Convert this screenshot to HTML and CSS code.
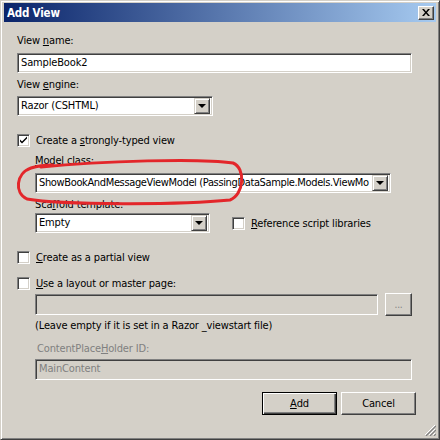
FILE: index.html
```html
<!DOCTYPE html>
<html>

<head>
    <title>Add View</title>
    <link rel="stylesheet" href="styles.css">
</head>

<body>
    <div class="window">
        <div class="titlebar">
            <span class="title">Add View</span>
            <span class="close">
                <svg width="8" height="7" viewBox="0 0 8 7">
                    <path d="M0 0h2l2 2.5 2-2.5h2l-3 3.5 3 3.5h-2l-2-2.5-2 2.5h-2l3-3.5z" fill="#000" />
                </svg>
            </span>
        </div>

        <div class="content">
            <div class="label first">View <u>n</u>ame:</div>
            <div class="field name-field">SampleBook2</div>

            <div class="label">View <u>e</u>ngine:</div>
            <div class="combo engine-combo">
                <span class="value">Razor (CSHTML)</span>
                <span class="arrow"><i></i></span>
            </div>

            <div class="check typed-check">
                <span class="box checked">
                    <svg width="9" height="9" viewBox="0 0 9 9">
                        <path d="M1 3.5l2 2 5-5v2l-5 5-2-2z" fill="#000" />
                    </svg>
                </span>
                <span>Create a <u>s</u>trongly-typed view</span>
            </div>

            <div class="indent">
                <div class="label model-label"><u>M</u>odel class:</div>
                <div class="combo model-combo">
                    <span class="value">ShowBookAndMessageViewModel (PassingDataSample.Models.ViewMo</span>
                    <span class="arrow"><i></i></span>
                </div>

                <div class="label scaffold-label">Sca<u>f</u>fold template:</div>
                <div class="scaffold-row">
                    <div class="combo scaffold-combo">
                        <span class="value">Empty</span>
                        <span class="arrow"><i></i></span>
                    </div>
                    <div class="check">
                        <span class="box"></span>
                        <span><u>R</u>eference script libraries</span>
                    </div>
                </div>
            </div>

            <div class="check partial-check">
                <span class="box"></span>
                <span><u>C</u>reate as a partial view</span>
            </div>

            <div class="check layout-check">
                <span class="box"></span>
                <span><u>U</u>se a layout or master page:</span>
            </div>

            <div class="indent">
                <div class="layout-row">
                    <div class="field disabled layout-field"></div>
                    <div class="button browse">...</div>
                </div>
                <div class="hint">(Leave empty if it is set in a Razor _viewstart file)</div>
                <div class="label muted placeholder-label">ContentPlace<u>H</u>older ID:</div>
                <div class="field disabled placeholder-field">MainContent</div>
            </div>

            <div class="actions">
                <div class="button default"><u>A</u>dd</div>
                <div class="button">Cancel</div>
            </div>
        </div>

        <!-- red marker drawn over the screenshot -->
        <svg class="annotation" width="440" height="440" viewBox="0 0 440 440">
            <path d="M40 166 C100 160, 200 157, 232 162 C245 167, 243 194, 229 199 C180 204, 60 204, 26 198 C13 192, 15 172, 30 167 C36 165, 44 164, 52 164"
                fill="none" stroke="#e3262a" stroke-width="3" stroke-linecap="round" />
        </svg>

        <svg class="grip" width="12" height="12" viewBox="0 0 12 12">
            <path d="M11 1L1 11M11 5L5 11M11 9L9 11" stroke="#fff" stroke-width="1" />
            <path d="M12 2L2 12M12 6L6 12M12 10L10 12" stroke="#808080" stroke-width="1.2" />
        </svg>
    </div>
</body>

</html>
```

FILE: styles.css
```css
* {
    box-sizing: border-box;
}

body {
    margin: 0;
    font-family: "DejaVu Sans Condensed", "Liberation Sans", sans-serif;
    font-size: 11px;
    letter-spacing: -0.15px;
    color: #000;
}

u {
    text-decoration: underline;
}

.window {
    position: relative;
    width: 440px;
    height: 440px;
    background-color: #d4d0c8;
    border: 1px solid;
    border-color: #d4d0c8 #404040 #404040 #d4d0c8;
    box-shadow: inset 1px 1px #fff, inset -1px -1px #808080;
    padding: 2px 3px 3px 3px;
}

.titlebar {
    height: 19px;
    display: flex;
    align-items: center;
    justify-content: space-between;
    padding: 0 2px 0 3px;
    background: linear-gradient(90deg, #0a246a 0%, #a6caf0 100%);
}

.title {
    color: #fff;
    font-weight: bold;
    font-size: 11.5px;
    letter-spacing: -0.2px;
}

.close {
    width: 16px;
    height: 14px;
    display: flex;
    align-items: center;
    justify-content: center;
    background-color: #d4d0c8;
    border: 1px solid;
    border-color: #fff #404040 #404040 #fff;
    box-shadow: inset -1px -1px #808080;
}

.content {
    padding-left: 13px;
    padding-right: 24px;
}

.label {
    line-height: 13px;
    height: 13px;
    margin-top: 5px;
}

.label.first {
    margin-top: 12px;
}

.muted {
    color: #808080;
}

.field {
    height: 20px;
    background-color: #fff;
    border: 1px solid;
    border-color: #808080 #fff #fff #808080;
    box-shadow: inset 1px 1px #404040, inset -1px -1px #d4d0c8;
    padding: 0 3px;
    line-height: 18px;
    white-space: nowrap;
    overflow: hidden;
}

.field.disabled {
    background-color: #d4d0c8;
    color: #808080;
}

.name-field {
    margin-top: 6px;
}

.combo {
    height: 20px;
    display: flex;
    align-items: center;
    background-color: #fff;
    border: 1px solid;
    border-color: #808080 #fff #fff #808080;
    box-shadow: inset 1px 1px #404040, inset -1px -1px #d4d0c8;
    padding: 2px;
}

.combo .value {
    flex: 1;
    padding-left: 1px;
    white-space: nowrap;
    overflow: hidden;
    line-height: 16px;
}

.combo .arrow {
    width: 16px;
    height: 16px;
    flex: none;
    display: flex;
    align-items: center;
    justify-content: center;
    background-color: #d4d0c8;
    border: 1px solid;
    border-color: #d4d0c8 #404040 #404040 #d4d0c8;
    box-shadow: inset 1px 1px #fff, inset -1px -1px #808080;
}

.combo .arrow i {
    width: 0;
    height: 0;
    border-left: 4px solid transparent;
    border-right: 4px solid transparent;
    border-top: 4px solid #000;
}

.engine-combo {
    width: 196px;
    margin-top: 5px;
}

.check {
    display: flex;
    align-items: center;
    gap: 6px;
    height: 13px;
    line-height: 13px;
}

.box {
    width: 13px;
    height: 13px;
    flex: none;
    display: flex;
    align-items: center;
    justify-content: center;
    background-color: #fff;
    border: 1px solid;
    border-color: #808080 #fff #fff #808080;
    box-shadow: inset 1px 1px #404040, inset -1px -1px #d4d0c8;
}

.typed-check {
    margin-top: 18px;
}

.indent {
    padding-left: 18px;
}

.model-label {
    margin-top: 7px;
}

.model-combo {
    width: 356px;
    margin-top: 6px;
}

.model-combo .value {
    letter-spacing: -0.36px;
}

.scaffold-label {
    margin-top: 5px;
}

.scaffold-row {
    display: flex;
    align-items: center;
    gap: 22px;
    margin-top: 2px;
}

.scaffold-combo {
    width: 175px;
}

.partial-check {
    margin-top: 18px;
}

.layout-check {
    margin-top: 13px;
}

.layout-row {
    display: flex;
    align-items: center;
    gap: 7px;
    margin-top: 3px;
}

.layout-field {
    width: 343px;
    height: 21px;
}

.button {
    height: 23px;
    display: flex;
    align-items: center;
    justify-content: center;
    background-color: #d4d0c8;
    border: 1px solid;
    border-color: #fff #404040 #404040 #fff;
    box-shadow: inset -1px -1px #808080;
}

.browse {
    width: 27px;
    color: #808080;
    font-size: 10px;
}

.hint {
    line-height: 13px;
    margin-top: 3px;
}

.placeholder-label {
    margin-top: 10px;
    padding-left: 2px;
}

.placeholder-field {
    margin-top: 4px;
    height: 21px;
}

.actions {
    display: flex;
    justify-content: flex-end;
    gap: 4px;
    margin-top: 12px;
    margin-right: -4px;
}

.actions .button {
    width: 75px;
}

.actions .default {
    border-color: #000;
    box-shadow: inset 1px 1px #fff, inset -1px -1px #404040, inset -2px -2px #808080;
}

.annotation {
    position: absolute;
    left: 0;
    top: 0;
    pointer-events: none;
}

.grip {
    position: absolute;
    right: 3px;
    bottom: 3px;
}
```
